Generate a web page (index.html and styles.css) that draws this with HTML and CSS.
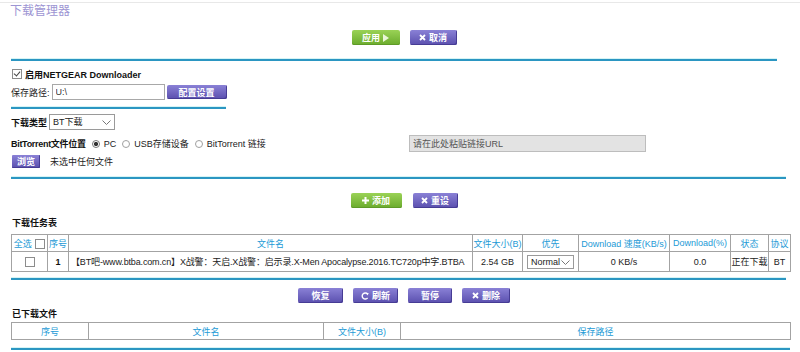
FILE: index.html
```html
<!DOCTYPE html>
<html lang="zh-CN">

<head>
    <meta charset="UTF-8" />
    <title>下载管理器</title>
    <meta name="viewport" content="width=device-width, initial-scale=1" />
    <link rel="stylesheet" href="styles.css">
</head>

<body>
    <div class="page">
        <h1 class="title">下载管理器</h1>

        <div class="actions actions-top">
            <button class="btn btn-green w48">应用
                <svg class="ico" width="6" height="8" viewBox="0 0 6 8"><polygon points="0,0 6,4 0,8" fill="#e9f6d6" /></svg>
            </button>
            <button class="btn btn-purple w47">
                <svg class="ico" width="7" height="7" viewBox="0 0 7 7"><path d="M1 1L6 6M6 1L1 6" stroke="#fff" stroke-width="1.8" /></svg>取消
            </button>
        </div>
        <div class="rule rule-top"></div>

        <label class="check-row">
            <input type="checkbox" class="chk" checked />
            <strong>启用NETGEAR Downloader</strong>
        </label>

        <div class="path-row">
            <span>保存路径:</span>
            <input type="text" class="path-input" value="U:\" />
            <button class="btn btn-purple btn-small w60">配置设置</button>
        </div>
        <div class="rule rule-short"></div>

        <div class="type-row">
            <strong>下载类型</strong>
            <span class="select type-select">
                <select><option>BT下载</option></select>
                <svg class="chevron" width="9" height="5" viewBox="0 0 9 5"><polyline points="0.5,0.5 4.5,4.5 8.5,0.5" fill="none" stroke="#777" /></svg>
            </span>
        </div>

        <div class="bt-row">
            <div class="bt-options">
                <strong>BitTorrent文件位置</strong>
                <label class="radio"><input type="radio" name="src" checked />PC</label>
                <label class="radio"><input type="radio" name="src" />USB存储设备</label>
                <label class="radio"><input type="radio" name="src" />BitTorrent 链接</label>
            </div>
            <input type="text" class="url-input" placeholder="请在此处粘贴链接URL" />
        </div>

        <div class="browse-row">
            <button class="btn btn-purple btn-tiny w28">浏览</button>
            <span>未选中任何文件</span>
        </div>
        <div class="rule rule-mid"></div>

        <div class="actions actions-add">
            <button class="btn btn-green w51">
                <svg class="ico" width="7" height="7" viewBox="0 0 7 7"><path d="M3.5 0V7M0 3.5H7" stroke="#fff" stroke-width="2" /></svg> 添加
            </button>
            <button class="btn btn-purple w45">
                <svg class="ico" width="7" height="7" viewBox="0 0 7 7"><path d="M1 1L6 6M6 1L1 6" stroke="#fff" stroke-width="1.8" /></svg>重设
            </button>
        </div>

        <div class="section-title">下载任务表</div>
        <table class="grid task-table">
            <colgroup>
                <col style="width:36px" /><col style="width:21px" /><col style="width:404px" />
                <col style="width:50px" /><col style="width:56px" /><col style="width:91px" />
                <col style="width:61px" /><col style="width:38px" /><col style="width:22px" />
            </colgroup>
            <tr>
                <th>全选 <input type="checkbox" class="chk chk-head" /></th>
                <th>序号</th>
                <th>文件名</th>
                <th>文件大小(B)</th>
                <th>优先</th>
                <th>Download 速度(KB/s)</th>
                <th>Download(%)</th>
                <th>状态</th>
                <th>协议</th>
            </tr>
            <tr>
                <td><input type="checkbox" class="chk" /></td>
                <td><strong>1</strong></td>
                <td class="name">【BT吧-www.btba.com.cn】X战警：天启.X战警：启示录.X-Men Apocalypse.2016.TC720p中字.BTBA</td>
                <td>2.54 GB</td>
                <td>
                    <span class="select prio-select">
                        <select><option>Normal</option><option>High</option><option>Low</option></select>
                        <svg class="chevron" width="9" height="5" viewBox="0 0 9 5"><polyline points="0.5,0.5 4.5,4.5 8.5,0.5" fill="none" stroke="#777" /></svg>
                    </span>
                </td>
                <td>0 KB/s</td>
                <td>0.0</td>
                <td>正在下载</td>
                <td>BT</td>
            </tr>
        </table>
        <div class="rule rule-task"></div>

        <div class="actions actions-task">
            <button class="btn btn-purple w45">恢复</button>
            <button class="btn btn-purple w45">
                <svg class="ico" width="8" height="8" viewBox="0 0 8 8"><path d="M6.6 2.2A3 3 0 1 0 6.6 5.8" fill="none" stroke="#fff" stroke-width="1.4" /><polygon points="5,0.6 7.8,1.2 6.4,3.6" fill="#fff" /></svg> 刷新
            </button>
            <button class="btn btn-purple w44">暂停</button>
            <button class="btn btn-purple w48">
                <svg class="ico" width="7" height="7" viewBox="0 0 7 7"><path d="M1 1L6 6M6 1L1 6" stroke="#fff" stroke-width="1.8" /></svg> 删除
            </button>
        </div>

        <div class="section-title section-done">已下载文件</div>
        <table class="grid done-table">
            <colgroup>
                <col style="width:77px" /><col style="width:235px" /><col style="width:77px" /><col style="width:390px" />
            </colgroup>
            <tr>
                <th>序号</th>
                <th>文件名</th>
                <th>文件大小(B)</th>
                <th>保存路径</th>
            </tr>
        </table>
        <div class="rule rule-end"></div>
    </div>
</body>

</html>
```

FILE: styles.css
```css
body {
    margin: 0;
    padding-top: 2px;
    font-family: "Liberation Sans", "Noto Sans CJK SC", sans-serif;
    font-size: 9px;
    color: #222;
    background: #fff;
}

.page {
    width: 780px;
    padding: 0 10px;
    border-top: 1px solid #e8e8e8;
}

.title {
    margin: 0;
    height: 15px;
    line-height: 17px;
    font-size: 12px;
    font-weight: normal;
    color: #9d95d3;
}

strong {
    font-weight: bold;
    color: #111;
}

/* Separadores */
.rule {
    height: 2px;
    margin-left: 1px;
    width: 775px;
    background: #2b96c2;
    box-shadow: 0 -1px 0 #d6f4f5;
}

.rule-top {
    width: 766px;
    margin-top: 14px;
}

.rule-short {
    width: 215px;
    margin-top: 7px;
}

.rule-mid {
    margin-top: 9px;
}

.rule-task {
    margin-top: 6px;
}

.rule-end {
    margin-top: 8px;
    width: 779px;
}

/* Botones */
.actions {
    display: flex;
    justify-content: center;
    gap: 10px;
    padding-left: 8px;
    height: 15px;
}

.actions-top {
    margin-top: 12px;
}

.actions-add {
    margin-top: 14px;
    gap: 11px;
}

.actions-task {
    margin-top: 8px;
}

.btn {
    display: inline-flex;
    align-items: center;
    justify-content: center;
    gap: 3px;
    height: 15px;
    padding: 0;
    border: none;
    border-radius: 2px;
    font-family: inherit;
    font-size: 9px;
    font-weight: bold;
    color: #fff;
    cursor: pointer;
}

.btn-green {
    background: linear-gradient(to bottom, #9ad256, #6aab2c);
    box-shadow: inset 0 -1px 0 #5e9a27;
}

.btn-purple {
    background: linear-gradient(to bottom, #8a81d6, #5a4fae);
    box-shadow: inset -1px -1px 0 #463c94;
}

.btn-small {
    height: 14px;
}

.btn-tiny {
    height: 13px;
    border-radius: 1px;
}

.ico {
    display: block;
}

.w28 { width: 28px; }
.w44 { width: 44px; }
.w45 { width: 45px; }
.w47 { width: 47px; }
.w48 { width: 48px; }
.w51 { width: 51px; }
.w60 { width: 60px; }

/* Filas del formulario */
.check-row {
    display: flex;
    align-items: center;
    gap: 3px;
    height: 14px;
    margin-top: 6px;
    padding-left: 2px;
}

.chk {
    appearance: none;
    position: relative;
    width: 10px;
    height: 10px;
    margin: 0;
    border: 1px solid #8c8c8c;
    background: #fff;
    box-sizing: border-box;
    vertical-align: middle;
}

.chk:checked::after {
    content: "";
    position: absolute;
    left: 2px;
    top: 0;
    width: 3px;
    height: 5px;
    border: solid #444;
    border-width: 0 1.5px 1.5px 0;
    transform: rotate(40deg);
}

.path-row {
    display: flex;
    align-items: center;
    gap: 2px;
    height: 16px;
    margin-top: 3px;
    padding-left: 1px;
}

.path-input {
    width: 113px;
    height: 16px;
    margin: 0;
    padding: 0 3px;
    border: 1px solid #a8a8a8;
    box-sizing: border-box;
    font-family: inherit;
    font-size: 9px;
    color: #333;
}

.type-row {
    display: flex;
    align-items: center;
    gap: 2px;
    height: 16px;
    margin-top: 5px;
    padding-left: 1px;
}

.select {
    position: relative;
    display: inline-block;
}

.select select {
    appearance: none;
    display: block;
    margin: 0;
    padding: 0 0 0 3px;
    border: 1px solid #9a9a9a;
    border-radius: 0;
    background: #fff;
    box-sizing: border-box;
    font-family: inherit;
    font-size: 9px;
    color: #222;
}

.select .chevron {
    position: absolute;
    right: 4px;
    top: 50%;
    margin-top: -2px;
    pointer-events: none;
}

.type-select select {
    width: 66px;
    height: 16px;
}

.bt-row {
    display: flex;
    align-items: center;
    height: 17px;
    margin-top: 5px;
    padding-left: 1px;
}

.bt-options {
    display: flex;
    align-items: center;
    width: 398px;
}

.bt-options strong {
    letter-spacing: -0.3px;
}

.radio {
    display: flex;
    align-items: center;
    margin-left: 6px;
}

.radio input {
    appearance: none;
    width: 8px;
    height: 8px;
    margin: 0 4px 0 0;
    border: 1px solid #a0a0a0;
    border-radius: 50%;
    background: #fff;
}

.radio input:checked {
    border-color: #777;
    background: radial-gradient(circle, #333 0 1.8px, #fff 2.4px);
}

.url-input {
    width: 237px;
    height: 17px;
    margin: 0;
    padding: 0 3px;
    border: 1px solid #bdbdbd;
    box-sizing: border-box;
    background: #e3e3e3;
    font-family: inherit;
    font-size: 9px;
}

.url-input::placeholder {
    color: #555;
}

.browse-row {
    display: flex;
    align-items: center;
    gap: 10px;
    height: 13px;
    margin-top: 3px;
    padding-left: 2px;
}

/* Tablas */
.section-title {
    height: 14px;
    line-height: 14px;
    margin-top: 8px;
    padding-left: 2px;
    font-weight: bold;
    color: #111;
}

.section-done {
    margin-top: 4px;
}

.grid {
    border-collapse: collapse;
    table-layout: fixed;
    width: 779px;
    margin-left: 1px;
}

.task-table {
    margin-top: 4px;
}

.done-table {
    margin-top: 1px;
}

.grid th,
.grid td {
    border: 1px solid #a3a3a3;
    padding: 0;
    text-align: center;
    white-space: nowrap;
    overflow: hidden;
}

.grid th {
    height: 16px;
    font-weight: normal;
    color: #1c9ad6;
}

.grid td {
    height: 19px;
    color: #222;
}

.grid td.name {
    text-align: left;
    padding-left: 2px;
    letter-spacing: -0.15px;
}

.chk-head {
    margin-left: 1px;
}

.prio-select select {
    width: 47px;
    height: 14px;
    margin: 0 auto;
}
```
